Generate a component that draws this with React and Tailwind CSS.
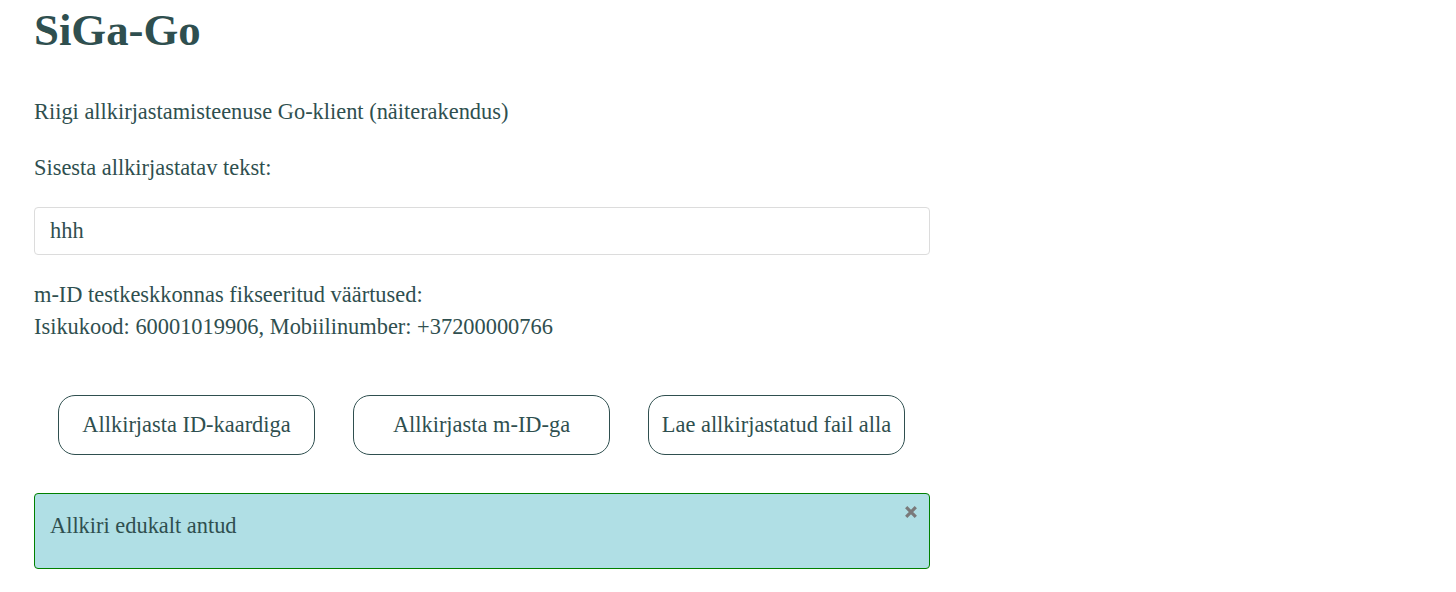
import React, { useState } from "react";

const buttons = ["Allkirjasta ID-kaardiga", "Allkirjasta m-ID-ga", "Lae allkirjastatud fail alla"];

export default function App() {
  const [text, setText] = useState("hhh");
  const [showAlert, setShowAlert] = useState(true);

  return (
    <div className="min-h-screen bg-white text-[#2f4f4f] font-['Liberation_Serif','Times_New_Roman',serif] text-[22.4px] leading-[32px]">
      <div className="w-[896px] ml-[34px]">
        <h1 className="text-[44.8px] font-bold leading-[52px] pt-[4px]">SiGa-Go</h1>

        <p className="mt-[40px]">Riigi allkirjastamisteenuse Go-klient (näiterakendus)</p>
        <p className="mt-[24px]">Sisesta allkirjastatav tekst:</p>

        <input
          value={text}
          onChange={(e) => setText(e.target.value)}
          className="mt-[23px] block w-full h-[48px] px-[15px] border border-[#dcdcdc] rounded-[4px] outline-none text-[#2f4f4f]"
        />

        <p className="mt-[24px]">
          m-ID testkeskkonnas fikseeritud väärtused:
          <br />
          Isikukood: 60001019906, Mobiilinumber: +37200000766
        </p>

        <div className="flex gap-[38px] pl-[24px] mt-[52px]">
          {buttons.map((label) => (
            <button
              key={label}
              className="w-[257px] h-[60px] border border-[#2f4f4f] rounded-[17px] bg-white whitespace-nowrap text-center"
            >
              {label}
            </button>
          ))}
        </div>

        {showAlert && (
          <div className="relative mt-[38px] h-[76px] bg-[#b0dfe5] border border-[#008000] rounded-[4px] pl-[15px] pt-[16px]">
            Allkiri edukalt antud
            <button
              onClick={() => setShowAlert(false)}
              className="absolute right-[12px] top-[12px] w-[12px] h-[12px] flex items-center justify-center"
            >
              <svg width="12" height="12" viewBox="0 0 12 12">
                <path d="M1.2 1.2 L10.8 10.8 M10.8 1.2 L1.2 10.8" stroke="#7a7a7a" strokeWidth="3.2" strokeLinecap="butt" />
              </svg>
            </button>
          </div>
        )}
      </div>
    </div>
  );
}
